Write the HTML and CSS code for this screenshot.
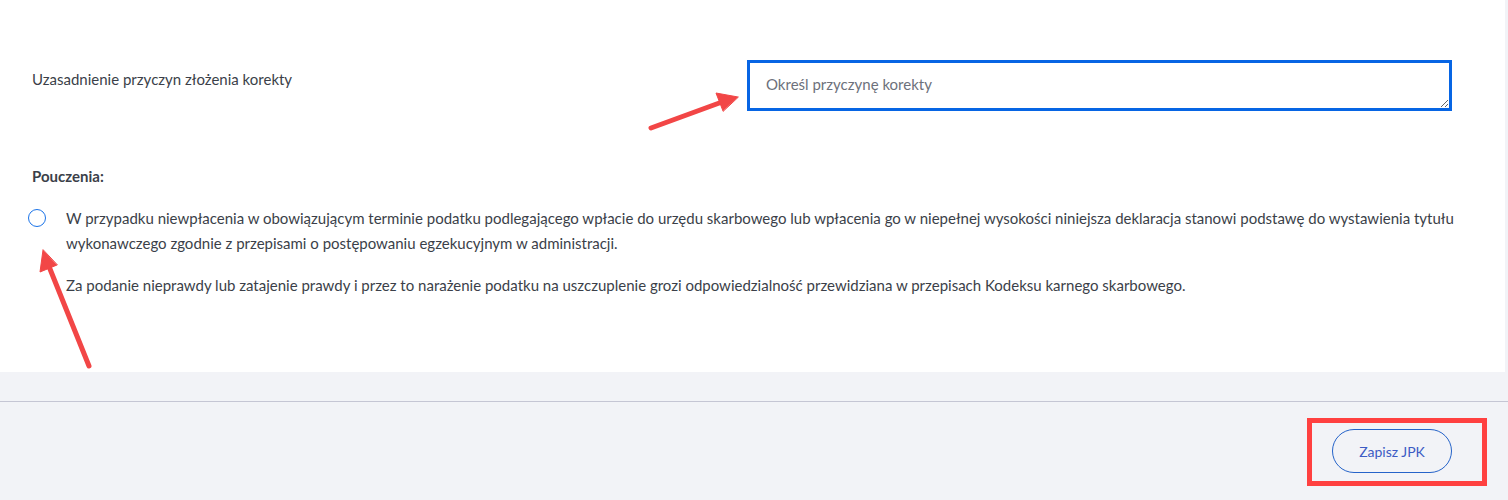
FILE: index.html
```html
<!DOCTYPE html>
<html lang="pl">
<head>
<meta charset="utf-8">
<title>JPK</title>
<link rel="stylesheet" href="styles.css">
</head>
<body>
<div class="page">
  <section class="panel">
    <div class="field-row">
      <label class="field-label" for="reason">Uzasadnienie przyczyn złożenia korekty</label>
      <textarea id="reason" class="field-input" placeholder="Określ przyczynę korekty"></textarea>
    </div>
    <h3 class="section-title">Pouczenia:</h3>
    <div class="notice">
      <span class="radio"></span>
      <div class="notice-text">
        <p>W przypadku niewpłacenia w obowiązującym terminie podatku podlegającego wpłacie do urzędu skarbowego lub wpłacenia go w niepełnej wysokości niniejsza deklaracja stanowi podstawę do wystawienia tytułu wykonawczego zgodnie z przepisami o postępowaniu egzekucyjnym w administracji.</p>
        <p>Za podanie nieprawdy lub zatajenie prawdy i przez to narażenie podatku na uszczuplenie grozi odpowiedzialność przewidziana w przepisach Kodeksu karnego skarbowego.</p>
      </div>
    </div>
  </section>
  <footer class="footer">
    <div class="btn-wrap">
      <button class="btn-save" type="button">Zapisz JPK</button>
    </div>
  </footer>
  <svg class="annotations" width="1508" height="500" viewBox="0 0 1508 500">
    <g stroke="#f24646" stroke-width="5" stroke-linecap="round" fill="#f24646">
      <line x1="651" y1="128" x2="722" y2="102"/>
      <polygon points="738,97 716,93 723,111" stroke-width="1"/>
      <line x1="89" y1="366" x2="48" y2="264"/>
      <polygon points="43,250 40,272 57,265" stroke-width="1"/>
    </g>
  </svg>
</div>
</body>
</html>
```

FILE: styles.css
```css
* { box-sizing: border-box; }
html, body { margin: 0; padding: 0; }
body {
  background: #f2f3f7;
  font-family: Lato, "Source Sans Pro", sans-serif;
  font-size: 15px;
  color: #3b3f49;
}
.page {
  position: relative;
  width: 1508px;
  height: 500px;
  overflow: hidden;
}
.panel {
  background: #ffffff;
  width: 1505px;
  height: 372px;
  padding: 60px 32px 0 32px;
}
.field-row {
  display: flex;
  align-items: flex-start;
  justify-content: space-between;
  padding-right: 21px;
}
.field-label {
  padding-top: 9px;
  line-height: 20px;
}
.field-input {
  width: 705px;
  height: 51px;
  border: 3px solid #0765e4;
  border-radius: 0;
  outline: none;
  padding: 11px 16px;
  font-family: inherit;
  font-size: 15px;
  line-height: 20px;
  color: #3b3f49;
  resize: vertical;
  display: block;
}
.field-input::placeholder { color: #6d717b; }
.section-title {
  margin: 55px 0 0;
  font-size: 15px;
  font-weight: 700;
  line-height: 20px;
}
.notice {
  display: flex;
  gap: 20px;
  margin-top: 20px;
}
.radio {
  flex: none;
  width: 18px;
  height: 18px;
  border: 1.5px solid #1a73e8;
  border-radius: 50%;
  margin-top: 3px;
  margin-left: -4px;
}
.notice-text p {
  margin: 0 0 17px;
  line-height: 25px;
}
.footer {
  margin-top: 29px;
  border-top: 1px solid #c5c6d4;
  display: flex;
  justify-content: flex-end;
  padding-right: 21px;
}
.btn-wrap {
  margin-top: 16px;
  border: 5px solid #ff4040;
  padding: 6px 30px 8px 20px;
}
.btn-save {
  width: 120px;
  height: 44px;
  border: 1px solid #2563c9;
  border-radius: 22px;
  background: transparent;
  color: #3c5bc4;
  font-family: inherit;
  font-size: 14px;
  cursor: pointer;
}
.annotations {
  position: absolute;
  left: 0;
  top: 0;
  pointer-events: none;
}
```
